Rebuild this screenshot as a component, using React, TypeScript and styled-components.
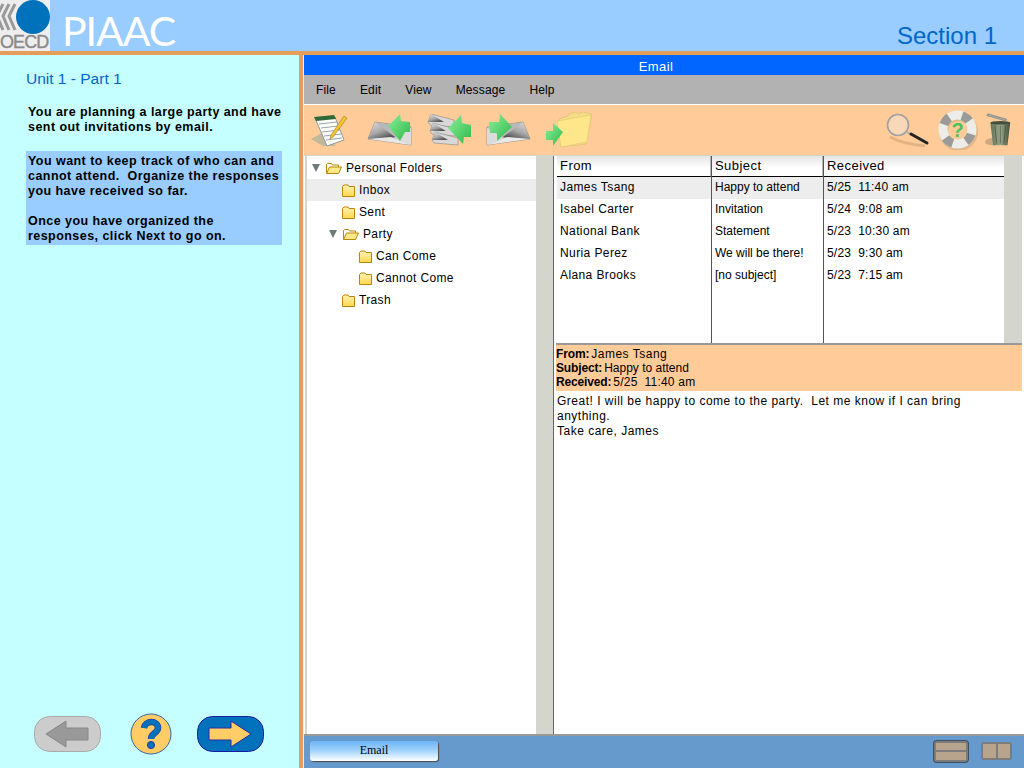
import styled, { createGlobalStyle } from "styled-components";

const GlobalStyle = createGlobalStyle`
  html, body { margin: 0; padding: 0; overflow: hidden; }
  body { font-family: "Liberation Sans", Arial, sans-serif; color: #000; }
  * { box-sizing: border-box; }
`;

const folders = [
  { name: "Personal Folders", level: 0, open: true },
  { name: "Inbox", level: 1, active: true },
  { name: "Sent", level: 1 },
  { name: "Party", level: 1, open: true },
  { name: "Can Come", level: 2 },
  { name: "Cannot Come", level: 2 },
  { name: "Trash", level: 1 },
];

const messages = [
  { from: "James Tsang", subject: "Happy to attend", received: "5/25  11:40 am", active: true },
  { from: "Isabel Carter", subject: "Invitation", received: "5/24  9:08 am" },
  { from: "National Bank", subject: "Statement", received: "5/23  10:30 am" },
  { from: "Nuria Perez", subject: "We will be there!", received: "5/23  9:30 am" },
  { from: "Alana Brooks", subject: "[no subject]", received: "5/23  7:15 am" },
];

const menus = ["File", "Edit", "View", "Message", "Help"];

const Defs = () => (
  <svg width="0" height="0" style={{ position: "absolute" }}>
    <defs>
      <linearGradient id="env" x1="0" y1="0" x2="0.6" y2="1">
        <stop offset="0" stopColor="#e2e2e2" />
        <stop offset="0.6" stopColor="#a8a8a8" />
        <stop offset="1" stopColor="#555" />
      </linearGradient>
      <linearGradient id="envBody" x1="0" y1="0" x2="1" y2="0">
        <stop offset="0" stopColor="#9a9a9a" />
        <stop offset="1" stopColor="#d0d0d0" />
      </linearGradient>
      <linearGradient id="grn" x1="0" y1="0" x2="1" y2="1">
        <stop offset="0" stopColor="#8af09a" />
        <stop offset="1" stopColor="#2fb84a" />
      </linearGradient>
      <linearGradient id="fold" x1="0" y1="0" x2="0" y2="1">
        <stop offset="0" stopColor="#fff2b8" />
        <stop offset="1" stopColor="#ffd84a" />
      </linearGradient>
      <linearGradient id="can" x1="0" y1="0" x2="1" y2="0">
        <stop offset="0" stopColor="#5f6f52" />
        <stop offset="0.5" stopColor="#9aa88c" />
        <stop offset="1" stopColor="#3f4c36" />
      </linearGradient>
    </defs>
  </svg>
);

const ComposeIcon = () => (
  <svg width="38" height="34" viewBox="0 0 38 34">
    <path d="M1 26 L12 20 L26 33 L13 33 Z" fill="#a8b09a" opacity="0.7" />
    <path d="M5 5 L25 4 L34 27 L17 33 Z" fill="#fdfdf8" stroke="#8a9aa0" />
    <path d="M4 4 L24 2 L26 6 L6 8 Z" fill="#2f6b3a" />
    <path d="M9 11 L27 9 M11 15 L28 13 M12 19 L30 17 M14 23 L31 21 M16 27 L32 25" stroke="#9aa6b0" />
    <path d="M21 22 L34 3 L37 5 L23 24 L20 26 Z" fill="#f4c430" stroke="#9a7a20" strokeWidth="0.6" />
  </svg>
);

const Envelope = () => (
  <>
    <path d="M1 25 L8 8 L44 13 L44 31 Z" fill="url(#envBody)" stroke="#666" strokeWidth="0.5" />
    <path d="M8 8 L44 13 L28 24 Z" fill="#b8b8b8" />
    <path d="M1 25 L8 8 L28 23 L22 25 Z" fill="url(#env)" />
    <path d="M1 25 L24 23 L44 31 Z" fill="#e8e8e8" />
    <path d="M28 24 L44 14 L44 31 Z" fill="#dcdcdc" />
  </>
);

const ReplyIcon = () => (
  <svg width="46" height="32" viewBox="0 0 46 32">
    <Envelope />
    <path d="M21 12 L33 0 L34 7 L43 8 L43 18 L38 18 L33 27 Z" fill="url(#grn)" />
  </svg>
);

const SmallEnvelope = ({ y, x }: { y: number; x: number }) => (
  <g transform={`translate(${x} ${y})`}>
    <path d="M0 8 L3 0 L26 6 L26 13 L2 11 Z" fill="#d8d8d8" stroke="#777" strokeWidth="0.5" />
    <path d="M3 0 L16 8 L0 8 Z" fill="url(#env)" />
  </g>
);

const ReplyAllIcon = () => (
  <svg width="46" height="32" viewBox="0 0 46 32">
    <SmallEnvelope x={1} y={0} />
    <SmallEnvelope x={3} y={9} />
    <SmallEnvelope x={5} y={18} />
    <path d="M21 14 L34 1 L35 9 L44 11 L44 23 L37 23 L36 30 Z" fill="url(#grn)" />
  </svg>
);

const ForwardIcon = () => (
  <svg width="46" height="33" viewBox="0 0 46 33">
    <g transform="translate(45 0) scale(-1 1)">
      <Envelope />
    </g>
    <path d="M3 8 L13 8 L14 0 L26 13 L11 27 L11 19 L4 19 Z" fill="url(#grn)" />
  </svg>
);

const MoveIcon = () => (
  <svg width="48" height="38" viewBox="0 0 48 38">
    <path d="M14 8 L23 5 L24 3 L31 1 L33 3 L38 1 L47 3 L41 33 L16 36 Z" fill="#f4dc88" stroke="#d8bc64" strokeWidth="0.6" />
    <path d="M12 10 L46 4 L42 31 L16 36 Z" fill="#ffe68a" stroke="#e0c870" strokeWidth="0.6" />
    <path d="M1 20 L8 20 L8 12 L18 21 L8 35 L8 29 L1 29 Z" fill="url(#grn)" />
  </svg>
);

const SearchIcon = () => (
  <svg width="46" height="36" viewBox="0 0 46 36">
    <path d="M5 25 Q18 32 40 34" stroke="#d6a878" strokeWidth="3" fill="none" opacity="0.7" />
    <circle cx="13" cy="13" r="10.5" fill="#f8d8b8" stroke="#a0a0a0" strokeWidth="1.6" />
    <path d="M22 20 L26 23" stroke="#b0b0b0" strokeWidth="2" />
    <path d="M26 22 L42 31" stroke="#222" strokeWidth="3" strokeLinecap="round" />
  </svg>
);

const HelpIcon = () => (
  <svg width="40" height="40" viewBox="0 0 40 40">
    <circle cx="20.5" cy="21.5" r="15" fill="none" stroke="#c8a078" strokeWidth="9" opacity="0.5" />
    <circle cx="19.5" cy="19.5" r="14.5" fill="none" stroke="#ecece8" strokeWidth="9" />
    <circle
      cx="19.5"
      cy="19.5"
      r="14.5"
      fill="none"
      stroke="#9a9a96"
      strokeWidth="9"
      strokeDasharray="9 13.8"
      transform="rotate(-72 19.5 19.5)"
    />
    <text x="19.5" y="26.5" textAnchor="middle" fontFamily="Liberation Sans" fontWeight="700" fontSize="20" fill="#4cc05a">?</text>
  </svg>
);

const TrashIcon = () => (
  <svg width="30" height="38" viewBox="0 0 30 38">
    <ellipse cx="8" cy="32" rx="8" ry="4" fill="#b09070" opacity="0.6" />
    <path d="M6 11 L28 11 L25 36 L9 36 Z" fill="url(#can)" />
    <path d="M11 14 L13 34 M17 14 L17 34 M23 14 L21 34" stroke="#3f4a38" strokeWidth="0.7" />
    <ellipse cx="17" cy="11" rx="11" ry="2" fill="#44503e" />
    <path d="M3 1 L24 7 L23 9 L2 3 Z" fill="#9fb0a8" stroke="#556" strokeWidth="0.5" />
  </svg>
);

const FolderClosed = () => (
  <svg width="13" height="13" viewBox="0 0 13 13">
    <path d="M.5 12.5 L.5 2.5 L2 1 L6 1 L7 2.5 L12.5 2.5 L12.5 12.5 Z" fill="url(#fold)" stroke="#b8860b" />
  </svg>
);

const FolderOpen = () => (
  <svg width="16" height="11" viewBox="0 0 16 11">
    <path d="M.5 10.5 L.5 1.5 L1.5 .5 L5.5 .5 L6.5 2 L12.5 2 L12.5 4" fill="#fff" stroke="#b8860b" />
    <path d="M.5 10.5 L3.5 4 L15.5 4 L12.5 10.5 Z" fill="#ffe88a" stroke="#b8860b" />
  </svg>
);

const Page = styled.div`
  width: 1024px;
  height: 768px;
  display: flex;
  flex-direction: column;
  overflow: hidden;
`;

const Header = styled.header`
  height: 51px;
  background: #99ccff;
  display: flex;
  align-items: flex-start;
`;

const LogoBox = styled.div`
  width: 50px;
  height: 51px;
  background: #eeeeee;
  position: relative;
  overflow: hidden;
`;

const OecdText = styled.span`
  position: absolute;
  left: 0;
  bottom: 0;
  font-size: 18px;
  line-height: 17px;
  letter-spacing: -0.9px;
  color: #8a8a8a;
  -webkit-text-stroke: 0.4px #8a8a8a;
`;

const Piaac = styled.div`
  margin-left: 12px;
  margin-top: 10px;
  font-family: Lato, sans-serif;
  font-weight: 400;
  font-size: 41px;
  line-height: 42px;
  color: #fff;
  letter-spacing: -1px;
`;

const SectionTitle = styled.div`
  margin-left: auto;
  margin-right: 27px;
  margin-top: 22px;
  font-size: 24px;
  line-height: 28px;
  color: #0066cc;
`;

const Main = styled.div`
  flex: 1;
  min-height: 0;
  display: flex;
  border-top: 4px solid #e39e5c;
`;

const LeftPanel = styled.aside`
  width: 303px;
  background: #c6ffff;
  border-right: 4px solid #e39e5c;
  padding: 15px 13px 0 26px;
  display: flex;
  flex-direction: column;
`;

const UnitTitle = styled.div`
  font-size: 15.5px;
  line-height: 18px;
  color: #0066cc;
  margin-bottom: 17px;
`;

const Instruction = styled.p`
  margin: 0;
  width: 262px;
  font-size: 12.5px;
  line-height: 15px;
  font-weight: 700;
  letter-spacing: 0.45px;
  padding: 0 2px;
`;

const Highlight = styled.div`
  margin-top: 16px;
  width: 256px;
  height: 94px;
  padding-top: 3px;
  background: #99ccff;
`;

const Spacer = styled.div`
  height: 15px;
`;

const NavRow = styled.nav`
  margin-top: auto;
  margin-left: 8px;
  margin-bottom: 13px;
  display: flex;
  align-items: center;
  gap: 25px;
`;

const EmailApp = styled.section`
  flex: 1;
  min-width: 0;
  display: flex;
  flex-direction: column;
  border-left: 1px solid #eee;
`;

const TitleBar = styled.div`
  height: 20px;
  padding-right: 16px;
  background: #0066ff;
  color: #fff;
  font-size: 13px;
  line-height: 24px;
  text-align: center;
  letter-spacing: 0.4px;
  overflow: hidden;
`;

const MenuBar = styled.div`
  height: 30px;
  background: #b2b2b2;
  border-bottom: 1px solid #fff;
  display: flex;
  align-items: center;
  padding: 0 0 0 12px;
  gap: 24px;
`;

const MenuItem = styled.span`
  font-size: 12px;
  letter-spacing: 0.15px;
`;

const Toolbar = styled.div`
  height: 50px;
  background: #ffcc99;
  display: flex;
  align-items: center;
  padding: 0 12px 0 6px;
`;

const ToolButton = styled.div<{ $w: number }>`
  width: ${(p) => p.$w}px;
  display: flex;
  justify-content: flex-start;
  align-items: center;
`;

const ToolSpacer = styled.div`
  flex: 1;
`;

const Body = styled.div`
  flex: 1;
  min-height: 0;
  display: flex;
  background: #fff;
  border-top: 1px solid #d4d5cd;
`;

const TreePane = styled.div`
  width: 248px;
  margin-left: 1px;
  border-left: 2px solid #d4d5cd;
  display: flex;
`;

const TreeList = styled.ul`
  flex: 1;
  list-style: none;
  margin: 0;
  padding: 1px 0 0;
`;

const TreeRow = styled.li<{ $level: number; $active?: boolean; $open?: boolean }>`
  height: 22px;
  display: flex;
  align-items: center;
  gap: 4px;
  font-size: 12px;
  letter-spacing: 0.35px;
  padding-left: ${(p) =>
    p.$open ? (p.$level === 0 ? 5 : 22) : p.$level === 1 ? 35 : 52}px;
  background: ${(p) => (p.$active ? "#ededed" : "transparent")};
`;

const Arrow = styled.span`
  width: 0;
  height: 0;
  border-left: 4.5px solid transparent;
  border-right: 4.5px solid transparent;
  border-top: 8px solid #6f7a7a;
  margin-right: 2px;
`;

const ScrollTrack = styled.div<{ $w: number }>`
  width: ${(p) => p.$w}px;
  background: #d4d5cd;
`;

const Divider = styled.div`
  width: 3px;
  background: #fff;
  border-left: 1px solid #666;
`;

const ContentPane = styled.div`
  flex: 1;
  min-width: 0;
  display: flex;
  flex-direction: column;
`;

const TableWrap = styled.div`
  height: 187px;
  margin-left: 1px;
  margin-right: 2px;
  display: flex;
`;

const Table = styled.div`
  flex: 1;
  min-width: 0;
  display: grid;
  grid-template-columns: 155px 112px 1fr;
  grid-template-rows: 21px;
  grid-auto-rows: 22px;
  position: relative;
`;

const HeadCell = styled.div`
  height: 21px;
  background: linear-gradient(#e4e4e4, #fff 60%);
  border-bottom: 1px solid #000;
  border-right: 2px solid #b5b5b5;
  font-size: 13px;
  line-height: 19px;
  letter-spacing: 0.45px;
  padding-left: 3px;

  &:nth-child(3) {
    border-right: 0;
  }
`;

const Cell = styled.div<{ $active?: boolean; $spacing: number }>`
  height: 22px;
  font-size: 12px;
  line-height: 20px;
  letter-spacing: ${(p) => p.$spacing}px;
  padding-left: 3px;
  white-space: pre;
  background: ${(p) => (p.$active ? "#ededed" : "transparent")};
`;

const ColumnRule = styled.div<{ $x: number }>`
  position: absolute;
  top: 0;
  bottom: 0;
  left: ${(p) => p.$x}px;
  width: 1px;
  background: #555;
`;

const MessageHead = styled.div`
  height: 48px;
  margin-right: 2px;
  border-top: 2px solid #999;
  padding: 2px 0 0 0;
  background: #ffcc99;
  font-size: 12px;
  line-height: 14px;
  white-space: pre;
`;

const Strong = styled.b`
  letter-spacing: -0.15px;
  margin-right: 2px;
`;

const MetaValue = styled.span<{ $spacing: number }>`
  letter-spacing: ${(p) => p.$spacing}px;
`;

const MessageBody = styled.div`
  flex: 1;
  padding: 3px 20px 0 1px;
  font-size: 12px;
  line-height: 15px;
  letter-spacing: 0.5px;
  white-space: pre-wrap;
`;

const Taskbar = styled.div`
  height: 34px;
  background: #6699cc;
  border-top: 2px solid #999;
  display: flex;
  align-items: center;
  padding: 0 12px 2px 6px;
`;

const TaskButton = styled.div`
  width: 128px;
  height: 20px;
  margin-right: auto;
  border-radius: 3px;
  background: linear-gradient(#6db4f6 0%, #9dd0fb 45%, #ffffff 100%);
  box-shadow: 1px 1px 1px #4a4a4a;
  font-family: "Liberation Serif", serif;
  font-size: 12px;
  line-height: 19px;
  text-align: center;
`;

const LayoutToggle = styled.div<{ $rows?: boolean; $on?: boolean }>`
  width: ${(p) => (p.$on ? 34 : 31)}px;
  height: ${(p) => (p.$on ? 21 : 18)}px;
  display: grid;
  gap: 2px;
  padding: 2px;
  border-radius: 3px;
  background: #7c7c7c;
  box-shadow: ${(p) => (p.$on ? "0 0 0 1px #3f4f60" : "none")};
  margin-left: ${(p) => (p.$on ? 0 : 13)}px;
  grid-template-${(p) => (p.$rows ? "rows" : "columns")}: 1fr 1fr;
`;

const Pane = styled.span`
  background: #b8a48c;
`;

const BackBtn = () => (
  <svg width="71" height="37" viewBox="0 0 71 37">
    <rect x=".5" y=".5" width="66" height="35" rx="15" fill="#cccccc" stroke="#aaa" />
    <path d="M12 18 L32 5 L32 12 L54 12 L54 24 L32 24 L32 31 Z" fill="#999" stroke="#888" />
  </svg>
);

const QuestionBtn = () => (
  <svg width="42" height="42" viewBox="0 0 42 42">
    <circle cx="21" cy="21" r="20" fill="#ffcc66" stroke="#3366aa" />
    <path d="M14 15 C15 7 28 7 28 15 C28 20 21 20 21 26" fill="none" stroke="#2a3aa0" strokeWidth="6.5" />
    <path d="M14 15 C15 7 28 7 28 15 C28 20 21 20 21 26" fill="none" stroke="#0072bc" strokeWidth="5" />
    <circle cx="21" cy="32" r="3.6" fill="#0072bc" stroke="#2a3aa0" />
  </svg>
);

const NextBtn = () => (
  <svg width="68" height="37" viewBox="0 0 68 37">
    <rect x=".5" y=".5" width="66" height="35" rx="15" fill="#0072bc" stroke="#1a1aa0" />
    <path d="M54 18 L34 5 L34 12 L12 12 L12 24 L34 24 L34 31 Z" fill="#ffcc66" stroke="#2a2aa0" />
  </svg>
);

export default function App() {
  return (
    <Page>
      <GlobalStyle />
      <Defs />
      <Header>
        <LogoBox>
          <svg width="50" height="36" viewBox="0 0 50 36">
            <path d="M3 4 L-3 16 L3 30 M9 4 L3 16 L9 30 M15 4 L9 16 L15 30" stroke="#999" strokeWidth="3" fill="none" />
            <circle cx="33" cy="17" r="17" fill="#0072bc" />
          </svg>
          <OecdText>OECD</OecdText>
        </LogoBox>
        <Piaac>PIAAC</Piaac>
        <SectionTitle>Section 1</SectionTitle>
      </Header>
      <Main>
        <LeftPanel>
          <UnitTitle>Unit 1 - Part 1</UnitTitle>
          <Instruction>
            You are planning a large party and have sent out invitations by email.
          </Instruction>
          <Highlight>
            <Instruction>
              You want to keep track of who can and cannot attend.&nbsp; Organize the responses you have received so far.
            </Instruction>
            <Spacer />
            <Instruction>
              Once you have organized the responses, click Next to go on.
            </Instruction>
          </Highlight>
          <NavRow>
            <BackBtn />
            <QuestionBtn />
            <NextBtn />
          </NavRow>
        </LeftPanel>
        <EmailApp>
          <TitleBar>Email</TitleBar>
          <MenuBar>
            {menus.map((m) => (
              <MenuItem key={m}>{m}</MenuItem>
            ))}
          </MenuBar>
          <Toolbar>
            <ToolButton $w={57}><ComposeIcon /></ToolButton>
            <ToolButton $w={60}><ReplyIcon /></ToolButton>
            <ToolButton $w={59}><ReplyAllIcon /></ToolButton>
            <ToolButton $w={59}><ForwardIcon /></ToolButton>
            <ToolButton $w={50}><MoveIcon /></ToolButton>
            <ToolSpacer />
            <ToolButton $w={53}><SearchIcon /></ToolButton>
            <ToolButton $w={47}><HelpIcon /></ToolButton>
            <ToolButton $w={27}><TrashIcon /></ToolButton>
          </Toolbar>
          <Body>
            <TreePane>
              <TreeList>
                {folders.map((f) => (
                  <TreeRow key={f.name} $level={f.level} $active={f.active} $open={f.open}>
                    {f.open && <Arrow />}
                    {f.open ? <FolderOpen /> : <FolderClosed />}
                    {f.name}
                  </TreeRow>
                ))}
              </TreeList>
              <ScrollTrack $w={17} />
            </TreePane>
            <Divider />
            <ContentPane>
              <TableWrap>
                <Table>
                  <HeadCell>From</HeadCell>
                  <HeadCell>Subject</HeadCell>
                  <HeadCell>Received</HeadCell>
                  {messages.map((m) => [
                    <Cell key={m.from} $active={m.active} $spacing={0.4}>{m.from}</Cell>,
                    <Cell key={m.subject} $active={m.active} $spacing={0}>{m.subject}</Cell>,
                    <Cell key={m.received} $active={m.active} $spacing={0.2}>{m.received}</Cell>,
                  ])}
                  <ColumnRule $x={154} />
                  <ColumnRule $x={266} />
                </Table>
                <ScrollTrack $w={18} />
              </TableWrap>
              <MessageHead>
                <Strong>From:</Strong><MetaValue $spacing={0.5}>James Tsang</MetaValue>{"\n"}
                <Strong>Subject:</Strong><MetaValue $spacing={0}>Happy to attend</MetaValue>{"\n"}
                <Strong>Received:</Strong><MetaValue $spacing={0.2}>5/25  11:40 am</MetaValue>
              </MessageHead>
              <MessageBody>
                {"Great! I will be happy to come to the party.  Let me know if I can bring anything.\nTake care, James"}
              </MessageBody>
            </ContentPane>
          </Body>
          <Taskbar>
            <TaskButton>Email</TaskButton>
            <LayoutToggle $rows $on><Pane /><Pane /></LayoutToggle>
            <LayoutToggle><Pane /><Pane /></LayoutToggle>
          </Taskbar>
        </EmailApp>
      </Main>
    </Page>
  );
}
